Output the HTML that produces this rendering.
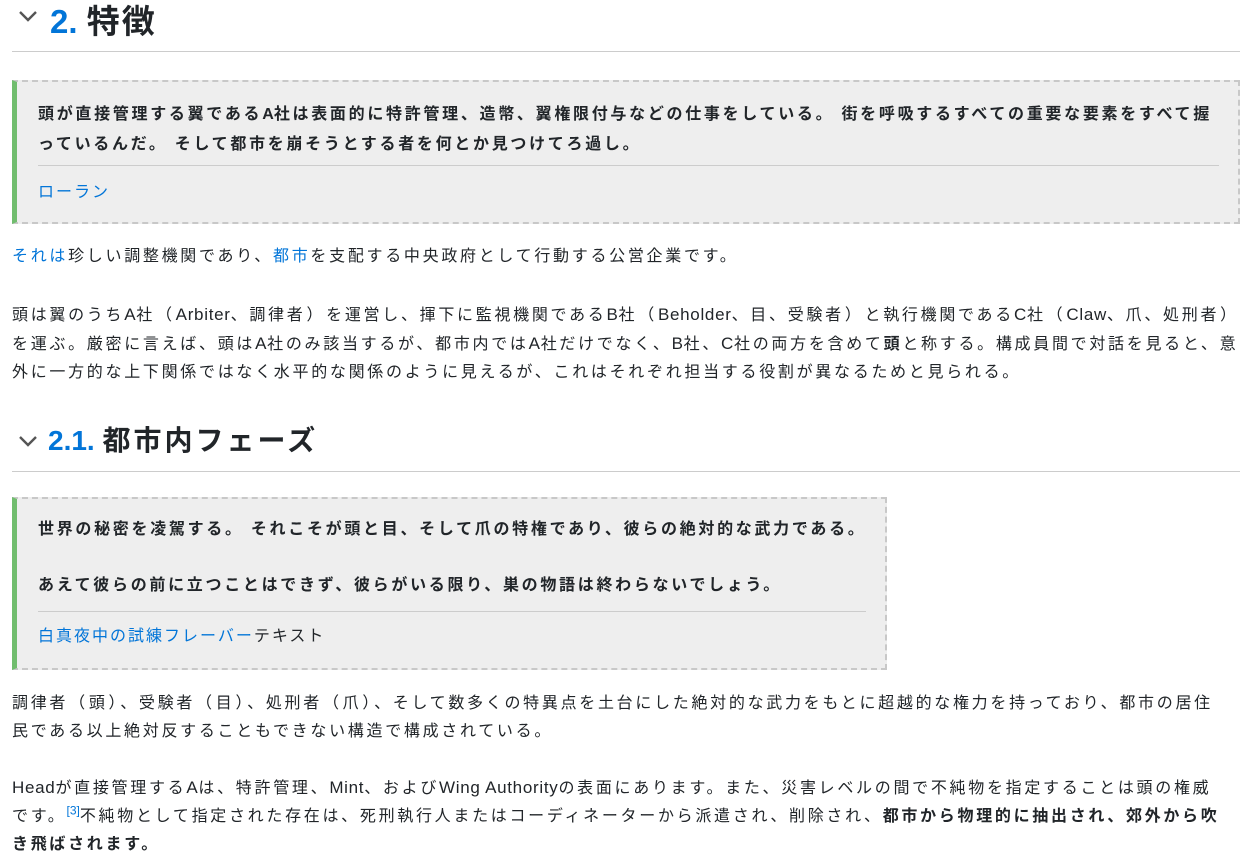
<!DOCTYPE html>
<html><head><meta charset="utf-8"><style>
body{margin:0;background:#fff;font-family:"Liberation Sans","Noto Sans CJK JP",sans-serif;color:#212529;width:1255px;height:857px;overflow:hidden;position:relative}
.a{position:absolute;white-space:nowrap}
a{color:#0275d8;text-decoration:none}
.l{letter-spacing:0.7px;font-size:17px}
.q{margin:0 1px}
h{position:absolute;font-weight:bold;color:#212529;white-space:nowrap}
h b{color:#0275d8}
.chev{position:absolute}
.hr{position:absolute;left:12px;right:15px;height:1px;background:#ccc}
.bq{position:absolute;left:12px;background:#eee;border:2px dashed #c8c8c8;border-left:5px solid #71bd6e;box-sizing:border-box}
.qt{position:absolute;left:38px;font-weight:bold;font-size:16px;letter-spacing:2.7px;white-space:nowrap}
.qt .l{font-size:16px;letter-spacing:0}
.p{position:absolute;left:12px;font-size:16px;letter-spacing:2.7px;white-space:nowrap;line-height:28px}
</style></head><body>
<svg class="chev" style="left:17px;top:9px" width="22" height="14" viewBox="0 0 22 14"><path d="M3 3l8 8 8-8" fill="none" stroke="#555" stroke-width="2.4"/></svg>
<h style="left:50px;top:3px;font-size:33px;line-height:38px"><b>2.</b> <span style="letter-spacing:2px">特徴</span></h>
<div class="hr" style="top:51px"></div>
<div class="bq" style="top:80px;width:1228px;height:144px"></div>
<div class="qt" style="top:100px;line-height:30px">頭が直接管理する翼である<span class="l">A</span>社は表面的に特許管理、造幣、翼権限付与などの仕事をしている。 街を呼吸するすべての重要な要素をすべて握<br>っているんだ。 そして都市を崩そうとする者を何とか見つけてろ過し。</div>
<div style="position:absolute;left:38px;top:165px;width:1181px;height:1px;background:#ccc"></div>
<div class="a" style="left:38px;top:178px;font-size:16px;letter-spacing:2px"><a>ローラン</a></div>
<div class="p" style="top:243px"><a>それは</a>珍しい調整機関であり、<a>都市</a>を支配する中央政府として行動する公営企業です。</div>
<div class="p" style="top:301px">頭は翼のうち<span class="l">A</span>社<span class="q">（</span><span class="l">Arbiter</span>、調律者<span class="q">）</span>を運営し、揮下に監視機関である<span class="l">B</span>社<span class="q">（</span><span class="l">Beholder</span>、目、受験者<span class="q">）</span>と執行機関である<span class="l">C</span>社<span class="q">（</span><span class="l">Claw</span>、爪、処刑者<span class="q">）</span><br>を運ぶ。厳密に言えば、頭は<span class="l">A</span>社のみ該当するが、都市内では<span class="l">A</span>社だけでなく、<span class="l">B</span>社、<span class="l">C</span>社の両方を含めて<b>頭</b>と称する。構成員間で対話を見ると、意<br>外に一方的な上下関係ではなく水平的な関係のように見えるが、これはそれぞれ担当する役割が異なるためと見られる。</div>
<svg class="chev" style="left:17px;top:434px" width="22" height="14" viewBox="0 0 22 14"><path d="M3 3l8 8 8-8" fill="none" stroke="#555" stroke-width="2.4"/></svg>
<h style="left:48px;top:424px;font-size:28px;line-height:34px"><b>2.1.</b> <span style="letter-spacing:3px">都市内フェーズ</span></h>
<div class="hr" style="top:471px"></div>
<div class="bq" style="top:497px;width:875px;height:173px"></div>
<div class="qt" style="top:516px;line-height:28px">世界の秘密を凌駕する。 それこそが頭と目、そして爪の特権であり、彼らの絶対的な武力である。</div>
<div class="qt" style="top:572px;line-height:28px">あえて彼らの前に立つことはできず、彼らがいる限り、巣の物語は終わらないでしょう。</div>
<div style="position:absolute;left:38px;top:611px;width:828px;height:1px;background:#ccc"></div>
<div class="a" style="left:38px;top:622px;font-size:16px;letter-spacing:2px"><a>白真夜中の試練フレーバー</a>テキスト</div>
<div class="p" style="top:690px">調律者<span class="q">（</span>頭<span class="q">）</span>、受験者<span class="q">（</span>目<span class="q">）</span>、処刑者<span class="q">（</span>爪<span class="q">）</span>、そして数多くの特異点を土台にした絶対的な武力をもとに超越的な権力を持っており、都市の居住<br>民である以上絶対反することもできない構造で構成されている。</div>
<div class="p" style="top:774px"><span class="l">Head</span>が直接管理する<span class="l">A</span>は、特許管理、<span class="l">Mint</span>、および<span class="l">Wing Authority</span>の表面にあります。また、災害レベルの間で不純物を指定することは頭の権威<br>です。<sup style="font-size:12px;line-height:0;letter-spacing:0"><a>[3]</a></sup>不純物として指定された存在は、死刑執行人またはコーディネーターから派遣され、削除され、<b>都市から物理的に抽出され、郊外から吹<br>き飛ばされます。</b></div>
</body></html>
